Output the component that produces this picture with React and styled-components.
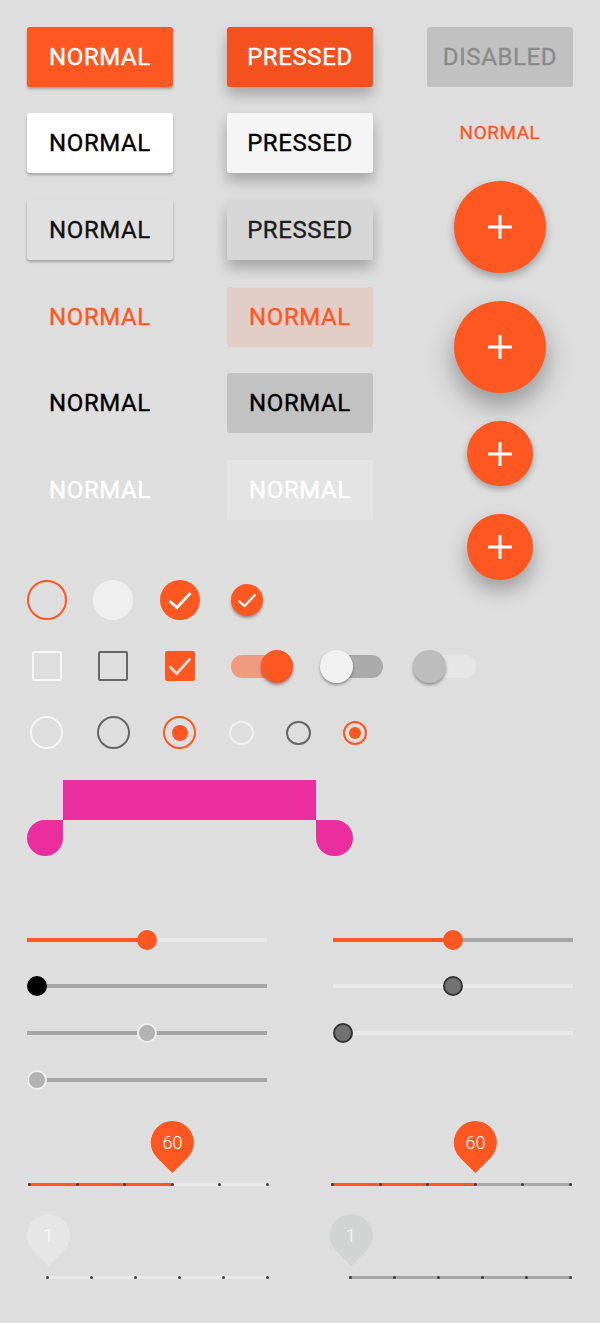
import React from 'react';
import styled, { createGlobalStyle } from 'styled-components';

const ORANGE = '#ff5722';

const Global = createGlobalStyle`
  html, body { margin: 0; padding: 0; background: #dedede; }
  body { font-family: Roboto, "Noto Sans", Arial, sans-serif; }
`;

const Page = styled.div`
  width: 600px;
  height: 1323px;
  box-sizing: border-box;
  padding: 26.67px 26.67px 0;
  background: #dedede;
  overflow: hidden;
`;

/* ---------- Buttons ---------- */
const Top = styled.div`
  display: flex;
  align-items: flex-start;
  gap: 53.33px;
`;

const ButtonGrid = styled.div`
  display: grid;
  grid-template-columns: repeat(2, 146.67px);
  grid-auto-rows: 60px;
  column-gap: 53.33px;
  row-gap: 26.67px;
`;

const variants = {
  orange: { bg: ORANGE, fg: '#fff', shadow: '0 2px 3px rgba(0,0,0,0.28)' },
  orangePressed: { bg: '#f4511e', fg: '#fff', shadow: '0 8px 14px rgba(0,0,0,0.26)' },
  white: { bg: '#ffffff', fg: '#000', shadow: '0 2px 3px rgba(0,0,0,0.28)' },
  whitePressed: { bg: '#f5f5f5', fg: '#000', shadow: '0 8px 14px rgba(0,0,0,0.26)' },
  grey: { bg: '#e0e0e0', fg: '#111', shadow: '0 2px 3px rgba(0,0,0,0.28)' },
  greyPressed: { bg: '#d6d6d6', fg: '#1c1c1c', shadow: '0 8px 14px rgba(0,0,0,0.26)' },
  flatOrange: { bg: 'transparent', fg: ORANGE, shadow: 'none' },
  flatOrangePressed: { bg: '#e3cec7', fg: ORANGE, shadow: 'none' },
  flatDark: { bg: 'transparent', fg: '#000', shadow: 'none' },
  flatDarkPressed: { bg: '#c2c2c2', fg: '#000', shadow: 'none' },
  flatLight: { bg: 'transparent', fg: '#fff', shadow: 'none' },
  flatLightPressed: { bg: '#e4e4e4', fg: '#fff', shadow: 'none' },
  disabled: { bg: '#c1c1c1', fg: '#8a8a8a', shadow: 'none' },
};

const Button = styled.div`
  display: flex;
  align-items: center;
  justify-content: center;
  width: 146.67px;
  height: 60px;
  border-radius: 3px;
  font-family: Roboto, Arial, sans-serif;
  font-weight: 400;
  font-size: 24px;
  letter-spacing: 0.6px;
  -webkit-text-stroke: 0.35px currentColor;
  background: ${(p) => variants[p.$v].bg};
  color: ${(p) => variants[p.$v].fg};
  box-shadow: ${(p) => variants[p.$v].shadow};
`;

const SideColumn = styled.div`
  width: 146.67px;
  display: flex;
  flex-direction: column;
  align-items: center;
`;

const FlatSmall = styled.div`
  margin-top: 26.33px;
  height: 40px;
  display: flex;
  align-items: center;
  justify-content: center;
  font-family: Roboto, Arial, sans-serif;
  font-weight: 400;
  font-size: 19px;
  letter-spacing: 0.5px;
  -webkit-text-stroke: 0.3px currentColor;
  color: ${ORANGE};
`;

const Fab = styled.div`
  margin-top: 28px;
  width: ${(p) => p.$size}px;
  height: ${(p) => p.$size}px;
  border-radius: 50%;
  background: ${ORANGE};
  display: flex;
  align-items: center;
  justify-content: center;
  box-shadow: ${(p) => p.$shadow};
`;

const Plus = () => (
  <svg width="24" height="24" viewBox="0 0 24 24">
    <path d="M12 0V24M0 12H24" stroke="#fff" strokeWidth="3" />
  </svg>
);

/* ---------- Selection controls ---------- */
const Controls = styled.div`
  display: flex;
  flex-direction: column;
  gap: 26.67px;
`;

const ControlRow = styled.div`
  display: flex;
  align-items: center;
  gap: 26.67px;
  height: 40px;
`;

const Cell = styled.div`
  width: ${(p) => p.$w || 40}px;
  height: 40px;
  display: flex;
  align-items: center;
  justify-content: center;
  flex: none;
`;

const Circle = styled.div`
  width: ${(p) => p.$size}px;
  height: ${(p) => p.$size}px;
  box-sizing: border-box;
  border-radius: 50%;
  background: ${(p) => p.$bg || 'transparent'};
  border: ${(p) => (p.$ring ? `${p.$bw || 2.67}px solid ${p.$ring}` : 'none')};
  box-shadow: ${(p) => p.$shadow || 'none'};
  display: flex;
  align-items: center;
  justify-content: center;
`;

const Dot = styled.div`
  width: ${(p) => p.$size}px;
  height: ${(p) => p.$size}px;
  border-radius: 50%;
  background: ${ORANGE};
`;

const Check = ({ size }) => (
  <svg width={size} height={size} viewBox="0 0 40 40">
    <polyline points="9.5,21 17,27.5 30.5,13" fill="none" stroke="#fff" strokeWidth="2.8" />
  </svg>
);

const Box = styled.div`
  width: 30px;
  height: 30px;
  box-sizing: border-box;
  border-radius: 2px;
  border: ${(p) => (p.$line ? `2.67px solid ${p.$line}` : 'none')};
  background: ${(p) => p.$bg || 'transparent'};
  display: flex;
  align-items: center;
  justify-content: center;
`;

const BoxCheck = () => (
  <svg width="30" height="30" viewBox="0 0 30 30">
    <polyline points="4.5,15.5 11.8,22.5 25.2,7.5" fill="none" stroke="#dcdcdc" strokeWidth="2.7" />
  </svg>
);

const Switch = styled.div`
  position: relative;
  width: 66.67px;
  height: 32.67px;
  display: flex;
  align-items: center;
`;

const SwitchTrack = styled.div`
  margin-left: 4px;
  width: 58.67px;
  height: 22.67px;
  border-radius: 11.33px;
  background: ${(p) => p.$c};
`;

const SwitchThumb = styled.div`
  position: absolute;
  top: 0;
  left: ${(p) => (p.$on ? '34px' : '0')};
  width: 32.67px;
  height: 32.67px;
  border-radius: 50%;
  background: ${(p) => p.$c};
  box-shadow: 0 2px 3px rgba(0, 0, 0, 0.35);
`;

/* ---------- Selection handles ---------- */
const Handles = styled.div`
  margin-top: 26.67px;
  display: grid;
  grid-template-columns: 36.33px 253.33px 36.33px;
  grid-template-rows: 40px 36px;
  width: max-content;
`;

const HandleBar = styled.div`
  grid-column: 2;
  grid-row: 1;
  background: #ea2e9d;
`;

const Drop = styled.div`
  grid-row: 2;
  grid-column: ${(p) => (p.$side === 'left' ? 1 : 3)};
  background: #ea2e9d;
  border-radius: ${(p) => (p.$side === 'left' ? '18px 0 18px 18px' : '0 18px 18px 18px')};
`;

/* ---------- Continuous sliders ---------- */
const SliderGrid = styled.div`
  margin-top: 74px;
  display: grid;
  grid-template-columns: 240px 240px;
  column-gap: 66.67px;
  align-items: start;
`;

const SliderColumn = styled.div`
  display: flex;
  flex-direction: column;
  gap: 26.67px;
`;

const SliderRow = styled.div`
  position: relative;
  height: 20px;
  display: flex;
  align-items: center;
`;

const SliderTrack = styled.div`
  width: 100%;
  height: 4px;
  background: ${(p) =>
    `linear-gradient(to right, ${p.$active} ${p.$pct}%, ${p.$rest} ${p.$pct}%)`};
`;

const thumbs = {
  orange: { bg: ORANGE, ring: null },
  black: { bg: '#000', ring: null },
  light: { bg: '#b2b2b2', ring: '#eeeeee' },
  dark: { bg: '#727272', ring: '#333333' },
};

const SliderThumb = styled.div`
  position: absolute;
  top: 0;
  left: calc(${(p) => p.$pct / 100} * (100% - 20px));
  width: 20px;
  height: 20px;
  box-sizing: border-box;
  border-radius: 50%;
  background: ${(p) => thumbs[p.$kind].bg};
  border: ${(p) => (thumbs[p.$kind].ring ? `2.67px solid ${thumbs[p.$kind].ring}` : 'none')};
`;

const Slider = ({ pct, active, rest, kind }) => (
  <SliderRow>
    <SliderTrack $pct={pct} $active={active || rest} $rest={rest} />
    <SliderThumb $pct={pct} $kind={kind} />
  </SliderRow>
);

/* ---------- Discrete sliders ---------- */
const DiscreteGrid = styled.div`
  margin-left: 1.6px;
  display: grid;
  grid-template-columns: 240.4px 240.4px;
  column-gap: 62.7px;
`;

const Discrete = styled.div`
  padding-top: ${(p) => p.$top}px;
  padding-left: ${(p) => p.$offset}px;
`;

const DiscreteTrack = styled.div`
  position: relative;
  height: 3px;
  display: flex;
  align-items: center;
  justify-content: space-between;
  background: ${(p) =>
    `linear-gradient(to right, ${p.$active} ${p.$pct}%, ${p.$rest} ${p.$pct}%)`};
`;

const Tick = styled.span`
  width: 3px;
  height: 3px;
  border-radius: 50%;
  background: #3f3f3f;
`;

const Pin = styled.div`
  position: absolute;
  left: calc(${(p) => p.$pct}% - 21.33px + ${(p) => p.$shift || 0}px);
  bottom: calc(100% + 19.3px);
  width: 42.67px;
  height: 42.67px;
  display: flex;
  align-items: center;
  justify-content: center;
  &::before {
    content: '';
    position: absolute;
    inset: 0;
    background: ${(p) => p.$c};
    border-radius: 50% 50% 0 50%;
    transform: rotate(45deg);
  }
`;

const PinLabel = styled.span`
  position: relative;
  font-family: Roboto, Arial, sans-serif;
  font-size: 18px;
  font-weight: 300;
  color: #fff;
`;

const DiscreteSlider = ({ top, offset, pct, active, rest, pin, label, shift }) => (
  <Discrete $top={top} $offset={offset}>
    <DiscreteTrack $pct={pct} $active={active || rest} $rest={rest}>
      {[0, 1, 2, 3, 4, 5].map((i) => (
        <Tick key={i} />
      ))}
      <Pin $pct={pct} $c={pin} $shift={shift}>
        <PinLabel>{label}</PinLabel>
      </Pin>
    </DiscreteTrack>
  </Discrete>
);

const BUTTONS = [
  ['NORMAL', 'orange'],
  ['PRESSED', 'orangePressed'],
  ['NORMAL', 'white'],
  ['PRESSED', 'whitePressed'],
  ['NORMAL', 'grey'],
  ['PRESSED', 'greyPressed'],
  ['NORMAL', 'flatOrange'],
  ['NORMAL', 'flatOrangePressed'],
  ['NORMAL', 'flatDark'],
  ['NORMAL', 'flatDarkPressed'],
  ['NORMAL', 'flatLight'],
  ['NORMAL', 'flatLightPressed'],
];

export default function App() {
  return (
    <Page>
      <Global />
      <Top>
        <ButtonGrid>
          {BUTTONS.map(([t, v], i) => (
            <Button key={i} $v={v}>
              {t}
            </Button>
          ))}
        </ButtonGrid>
        <SideColumn>
          <Button $v="disabled">DISABLED</Button>
          <FlatSmall>NORMAL</FlatSmall>
          <Fab $size={92} $shadow="0 4px 9px rgba(0,0,0,0.3)">
            <Plus />
          </Fab>
          <Fab $size={92} $shadow="0 12px 26px rgba(0,0,0,0.34)">
            <Plus />
          </Fab>
          <Fab $size={65.33} $shadow="0 3px 6px rgba(0,0,0,0.3)">
            <Plus />
          </Fab>
          <Fab $size={65.33} $shadow="0 10px 20px rgba(0,0,0,0.3)">
            <Plus />
          </Fab>
        </SideColumn>
      </Top>

      <Controls>
        <ControlRow>
          <Cell>
            <Circle $size={40} $ring={ORANGE} $bw={2.8} />
          </Cell>
          <Cell>
            <Circle $size={40} $bg="#efefef" />
          </Cell>
          <Cell>
            <Circle $size={40} $bg={ORANGE}>
              <Check size={40} />
            </Circle>
          </Cell>
          <Cell>
            <Circle $size={32} $bg={ORANGE} $shadow="0 2px 3px rgba(0,0,0,0.35)">
              <Check size={32} />
            </Circle>
          </Cell>
        </ControlRow>
        <ControlRow>
          <Cell>
            <Box $line="#f5f5f5" />
          </Cell>
          <Cell>
            <Box $line="#666666" />
          </Cell>
          <Cell>
            <Box $bg={ORANGE}>
              <BoxCheck />
            </Box>
          </Cell>
          <Cell $w={66.67}>
            <Switch>
              <SwitchTrack $c="#f09a80" />
              <SwitchThumb $on $c={ORANGE} />
            </Switch>
          </Cell>
          <Cell $w={66.67}>
            <Switch>
              <SwitchTrack $c="#aaaaaa" />
              <SwitchThumb $c="#f1f1f1" />
            </Switch>
          </Cell>
          <Cell $w={66.67}>
            <Switch>
              <SwitchTrack $c="#e6e6e6" />
              <SwitchThumb $c="#bdbdbd" />
            </Switch>
          </Cell>
        </ControlRow>
        <ControlRow>
          <Cell>
            <Circle $size={33} $ring="#f5f5f5" />
          </Cell>
          <Cell>
            <Circle $size={33} $ring="#666666" />
          </Cell>
          <Cell>
            <Circle $size={33} $ring={ORANGE}>
              <Dot $size={16} />
            </Circle>
          </Cell>
          <Cell $w={30}>
            <Circle $size={24.5} $ring="#f0f0f0" $bw={2.1} />
          </Cell>
          <Cell $w={30}>
            <Circle $size={24.5} $ring="#666666" $bw={2.1} />
          </Cell>
          <Cell $w={30}>
            <Circle $size={24.5} $ring={ORANGE} $bw={2.1}>
              <Dot $size={12} />
            </Circle>
          </Cell>
        </ControlRow>
      </Controls>

      <Handles>
        <HandleBar />
        <Drop $side="left" />
        <Drop $side="right" />
      </Handles>

      <SliderGrid>
        <SliderColumn>
          <Slider pct={50} active={ORANGE} rest="#e9e9e9" kind="orange" />
          <Slider pct={0} rest="#a6a6a6" kind="black" />
          <Slider pct={50} rest="#a6a6a6" kind="light" />
          <Slider pct={0} rest="#a6a6a6" kind="light" />
        </SliderColumn>
        <SliderColumn>
          <Slider pct={50} active={ORANGE} rest="#a6a6a6" kind="orange" />
          <Slider pct={50} rest="#e9e9e9" kind="dark" />
          <Slider pct={0} rest="#e9e9e9" kind="dark" />
        </SliderColumn>
      </SliderGrid>

      <DiscreteGrid>
        <DiscreteSlider top={93.2} offset={0} pct={60} active={ORANGE} rest="#e9e9e9" pin={ORANGE} label="60" />
        <DiscreteSlider top={93.2} offset={0} pct={60} active={ORANGE} rest="#a8a8a8" pin={ORANGE} label="60" />
        <DiscreteSlider top={90.3} offset={18} pct={0} rest="#e9e9e9" pin="#e6e6e6" label="1" shift={2} />
        <DiscreteSlider top={90.3} offset={18} pct={0} rest="#a6a6a6" pin="#d2d3d3" label="1" shift={1.5} />
      </DiscreteGrid>
    </Page>
  );
}
